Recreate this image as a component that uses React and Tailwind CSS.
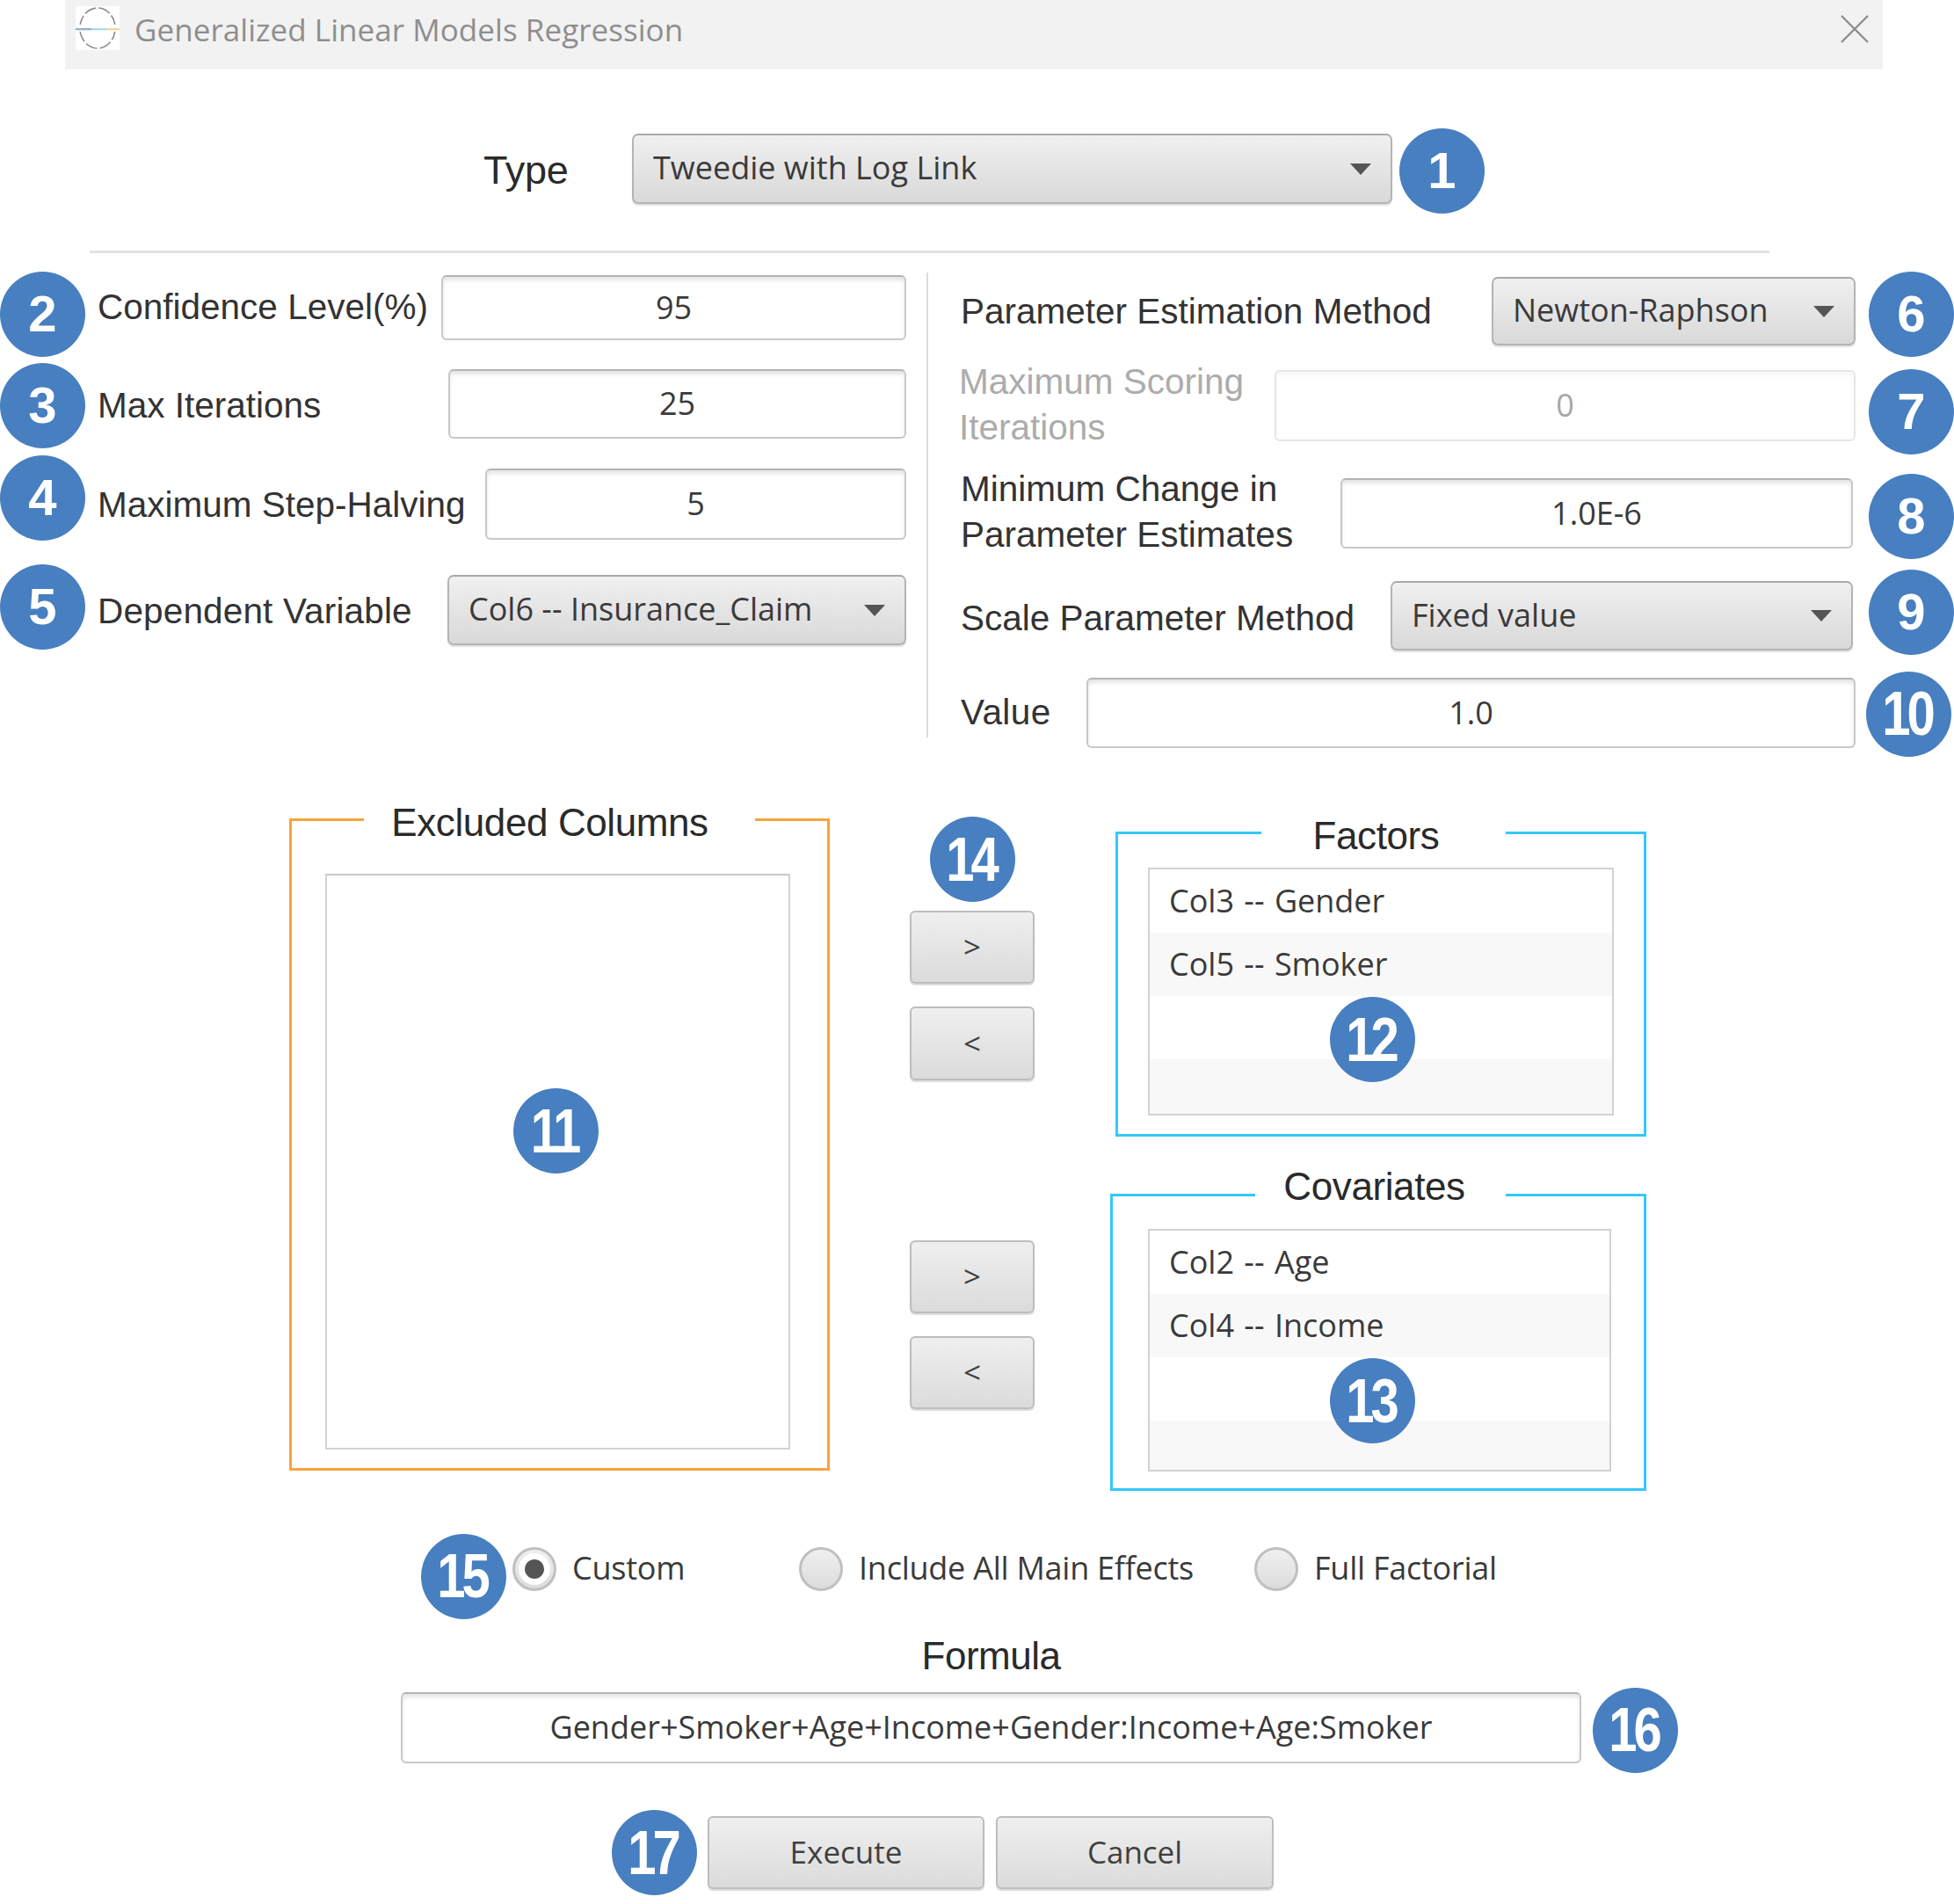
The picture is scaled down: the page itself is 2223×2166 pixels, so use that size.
const sans = "font-['Liberation_Sans',Arial,sans-serif]";

function Badge({ n, className = "" }) {
  return (
    <div className={`flex h-[97px] w-[97px] shrink-0 items-center justify-center rounded-full bg-[#477fc0] pr-[4px] font-['Liberation_Sans',Arial,sans-serif] text-[58px] font-bold leading-none tracking-[-4px] text-white ${className}`}>
      <span className={n.length > 1 ? "inline-block scale-y-[1.2]" : "inline-block"}>{n}</span>
    </div>
  );
}

function Caret() {
  return (
    <svg width="24" height="13" viewBox="0 0 24 13" className="shrink-0">
      <polygon points="0,0 24,0 12,13" fill="#555" />
    </svg>
  );
}

function Select({ text, className = "" }) {
  return (
    <div className={`flex shrink-0 items-center justify-between rounded-[7px] border-[2px] border-[#b4b4b4] border-t-[#a8a8a8] bg-gradient-to-b from-[#f0f0f0] to-[#d9d9d9] pl-[22px] pr-[22px] font-['Open_Sans',sans-serif] text-[36px] text-[#3a3a3a] shadow-[0_2px_1px_rgba(0,0,0,0.12)] ${className}`}>
      <span className="pb-[2px]">{text}</span>
      <Caret />
    </div>
  );
}

function Field({ text, className = "", disabled = false }) {
  return (
    <div className={`flex shrink-0 items-center justify-center rounded-[6px] border-[2px] bg-white pb-[1px] font-['Open_Sans',sans-serif] text-[36px] ${disabled ? "border-[#e6e6e6] text-[#a8a8a8] shadow-[inset_0_4px_4px_rgba(0,0,0,0.03)]" : "border-[#c8c8c8] border-t-[#b4b4b4] text-[#3a3a3a] shadow-[inset_0_4px_4px_rgba(0,0,0,0.1)]"} ${className}`}>
      {text}
    </div>
  );
}

function Label({ children, className = "" }) {
  return <div className={`font-['Liberation_Sans',Arial,sans-serif] text-[40.5px] leading-[52px] ${className}`}>{children}</div>;
}

function Button({ text, className = "" }) {
  return (
    <div className={`flex items-center justify-center rounded-[6px] border-[2px] border-[#bdbdbd] bg-gradient-to-b from-[#efefef] to-[#dbdbdb] font-['Open_Sans',sans-serif] text-[35px] text-[#3f3f3f] shadow-[0_2px_1px_rgba(0,0,0,0.14)] ${className}`}>
      {text}
    </div>
  );
}

function Radio({ checked, label, className = "" }) {
  return (
    <div className={`flex items-center ${className}`}>
      <div className="flex h-[50px] w-[50px] shrink-0 items-center justify-center rounded-full border-[3px] border-[#c0c0c0] bg-gradient-to-b from-[#f0f0f0] to-[#dcdcdc]">
        {checked && (
          <div className="flex h-[36px] w-[36px] items-center justify-center rounded-full bg-white">
            <div className="h-[22px] w-[22px] rounded-full bg-[#555]" />
          </div>
        )}
      </div>
      <span className="ml-[18px] pb-[3px] font-['Open_Sans',sans-serif] text-[36px] tracking-[-0.25px] text-[#3a3a3a]">{label}</span>
    </div>
  );
}

function ListRows({ rows }) {
  return (
    <>
      {rows.map((r, i) => (
        <div key={i} className={`flex h-[72px] items-center pl-[22px] font-['Open_Sans',sans-serif] text-[36px] [word-spacing:2px] text-[#3a3a3a] ${i % 2 ? "bg-[#f8f8f8]" : "bg-white"}`}>
          {r}
        </div>
      ))}
    </>
  );
}

function Legend({ text, className = "" }) {
  return (
    <div className={`absolute flex h-[56px] items-center justify-center bg-white font-['Liberation_Sans',Arial,sans-serif] text-[44px] tracking-[-0.4px] text-[#2a2a2a] ${className}`}>
      {text}
    </div>
  );
}

export default function App() {
  return (
    <div className="h-[2166px] w-[2223px] overflow-hidden bg-white">
      {/* title bar */}
      <div className="ml-[74px] flex h-[79px] w-[2068px] items-center bg-[#f2f2f2]">
        <svg width="50" height="50" viewBox="0 0 50 50" className="mb-[15px] ml-[12px] shrink-0">
          <rect width="50" height="50" fill="#fff" />
          <ellipse cx="25" cy="25" rx="20" ry="23" fill="none" stroke="#8a8f96" strokeWidth="1.6" strokeDasharray="14 3" />
          <rect x="0" y="21" width="50" height="8" fill="#fff" />
          <rect x="0" y="25" width="18" height="2.4" fill="#9ab0c4" />
          <rect x="18" y="25" width="17" height="2.4" fill="#a9dcec" />
          <rect x="35" y="25" width="15" height="2.4" fill="#f6d3a0" />
        </svg>
        <span className="mb-[11px] ml-[17px] font-['Open_Sans',sans-serif] text-[35px] tracking-[0.05px] text-[#8e8e8e]">Generalized Linear Models Regression</span>
        <svg width="32" height="32" viewBox="0 0 32 32" className="mb-[13px] ml-auto mr-[16px]">
          <path d="M1 1 L31 31 M31 1 L1 31" stroke="#8a8a8a" strokeWidth="2.2" />
        </svg>
      </div>

      {/* type */}
      <div className="ml-[550px] mt-[73px] flex h-[80px] items-center">
        <div className={`mt-[4px] w-[169px] ${sans} text-[45px] tracking-[-0.3px] text-[#2a2a2a]`}>Type</div>
        <Select text="Tweedie with Log Link" className="h-[80px] w-[865px]" />
        <Badge n="1" className="ml-[8px] mt-[4px]" />
      </div>

      <div className="ml-[102px] mt-[53px] h-[3px] w-[1911px] bg-[#e2e2e2]" />

      {/* parameters */}
      <div className="mt-[25px] flex items-start">
        <div className="w-[1031px] text-[#333]">
          <div className="flex h-[74px] items-center">
            <Badge n="2" className="mt-[14px]" />
            <Label className="mb-[2px] ml-[14px]">Confidence Level(%)</Label>
            <Field text="95" className="ml-auto h-[74px] w-[529px]" />
          </div>
          <div className="mt-[33px] flex h-[79px] items-center">
            <Badge n="3" className="mt-[3px]" />
            <Label className="ml-[14px] mt-[3px]">Max Iterations</Label>
            <Field text="25" className="ml-auto h-[79px] w-[521px]" />
          </div>
          <div className="mt-[34px] flex h-[81px] items-center">
            <Badge n="4" className="mb-[15px]" />
            <Label className="ml-[14px]">Maximum Step-Halving</Label>
            <Field text="5" className="ml-auto h-[81px] w-[479px]" />
          </div>
          <div className="mt-[40px] flex h-[80px] items-center">
            <Badge n="5" className="mb-[8px]" />
            <Label className="ml-[14px] mt-[2px] tracking-[0.15px]">Dependent Variable</Label>
            <Select text="Col6 -- Insurance_Claim" className="ml-auto h-[80px] w-[522px]" />
          </div>
        </div>

        <div className="ml-[23px] mt-[-3px] h-[529px] w-[2px] bg-[#dcdcdc]" />

        <div className="ml-[37px] w-[1130px] text-[#333]">
          <div className="mt-[2px] flex h-[78px] items-center">
            <Label>Parameter Estimation Method</Label>
            <Select text="Newton-Raphson" className="ml-auto h-[78px] w-[414px]" />
            <Badge n="6" className="ml-[15px] mt-[6px]" />
          </div>
          <div className="mt-[28px] flex h-[81px] items-center">
            <Label className="mb-[3px] ml-[-2px] text-[#acacac]">Maximum Scoring<br />Iterations</Label>
            <Field text="0" disabled className="ml-auto h-[81px] w-[661px]" />
            <Badge n="7" className="ml-[15px] mt-[13px]" />
          </div>
          <div className="mt-[42px] flex h-[80px] items-center">
            <Label className="mb-[4px]">Minimum Change in<br />Parameter Estimates</Label>
            <Field text="1.0E-6" className="ml-auto h-[80px] w-[583px]" />
            <Badge n="8" className="ml-[18px] mt-[6px]" />
          </div>
          <div className="mt-[37px] flex h-[79px] items-center">
            <Label className="mt-[5px]">Scale Parameter Method</Label>
            <Select text="Fixed value" className="ml-auto h-[79px] w-[526px]" />
            <Badge n="9" className="mb-[9px] ml-[18px]" />
          </div>
          <div className="mt-[31px] flex h-[80px] items-center">
            <Label className="mb-[3px] tracking-[0.4px]">Value</Label>
            <Field text="1.0" className="ml-auto h-[80px] w-[875px]" />
            <Badge n="10" className="ml-[12px] mr-[3px] mt-[2px]" />
          </div>
        </div>
      </div>

      {/* columns */}
      <div className="ml-[329px] mt-[80px] flex items-start">
        <div className="relative h-[742px] w-[615px] border-[3px] border-[#f9a33c] pl-[38px] pt-[60px]">
          <Legend text="Excluded Columns" className="left-[82px] top-[-26px] w-[445px] pr-[22px]" />
          <div className="h-[655px] w-[529px] border-[2px] border-[#d2d2d2] border-t-[#c8c8c8]" />
          <Badge n="11" className="absolute left-[252px] top-[304px]" />
        </div>

        <div className="relative ml-[91px] w-[142px] pt-[105px]">
          <Badge n="14" className="absolute left-[23px] top-[-2px]" />
          <Button text=">" className="h-[83px] text-[30px]" />
          <Button text="<" className="mt-[26px] h-[84px] text-[30px]" />
          <Button text=">" className="mt-[182px] h-[83px] text-[30px]" />
          <Button text="<" className="mt-[26px] h-[83px] text-[30px]" />
        </div>

        <div className="ml-[86px] w-[610px]">
          <div className="relative ml-[6px] mt-[15px] h-[347px] w-[604px] border-[3px] border-[#33c8fa] pl-[34px] pt-[38px]">
            <Legend text="Factors" className="left-[163px] top-[-26px] w-[278px] pr-[17px]" />
            <div className="relative h-[282px] w-[530px] overflow-hidden border-[2px] border-[#d2d2d2]">
              <ListRows rows={["Col3 -- Gender", "Col5 -- Smoker", "", ""]} />
              <Badge n="12" className="absolute left-[205px] top-[145px]" />
            </div>
          </div>
          <div className="relative mt-[65px] h-[338px] w-[610px] border-[3px] border-[#33c8fa] pl-[40px] pt-[37px]">
            <Legend text="Covariates" className="left-[162px] top-[-39px] w-[285px] pr-[14px]" />
            <div className="relative h-[276px] w-[527px] overflow-hidden border-[2px] border-[#d2d2d2]">
              <ListRows rows={["Col2 -- Age", "Col4 -- Income", "", ""]} />
              <Badge n="13" className="absolute left-[205px] top-[145px]" />
            </div>
          </div>
        </div>
      </div>

      {/* radios */}
      <div className="ml-[479px] mt-[64px] flex h-[50px] items-center">
        <Badge n="15" className="mt-[16px]" />
        <Radio checked label="Custom" className="ml-[7px] w-[326px]" />
        <Radio label="Include All Main Effects" className="w-[518px]" />
        <Radio label="Full Factorial" />
      </div>

      {/* formula */}
      <div className={`ml-[456px] mt-[50px] h-[48px] w-[1343px] text-center ${sans} text-[44px] leading-[48px] tracking-[-0.5px] text-[#2a2a2a]`}>Formula</div>
      <div className="ml-[456px] mt-[17px] flex h-[81px] items-center">
        <Field text="Gender+Smoker+Age+Income+Gender:Income+Age:Smoker" className="h-[81px] w-[1343px]" />
        <Badge n="16" className="ml-[13px] mt-[5px]" />
      </div>

      {/* actions */}
      <div className="ml-[696px] mt-[60px] flex h-[83px] items-center">
        <Badge n="17" />
        <Button text="Execute" className="ml-[12px] h-[83px] w-[315px]" />
        <Button text="Cancel" className="ml-[13px] h-[83px] w-[316px]" />
      </div>
    </div>
  );
}
